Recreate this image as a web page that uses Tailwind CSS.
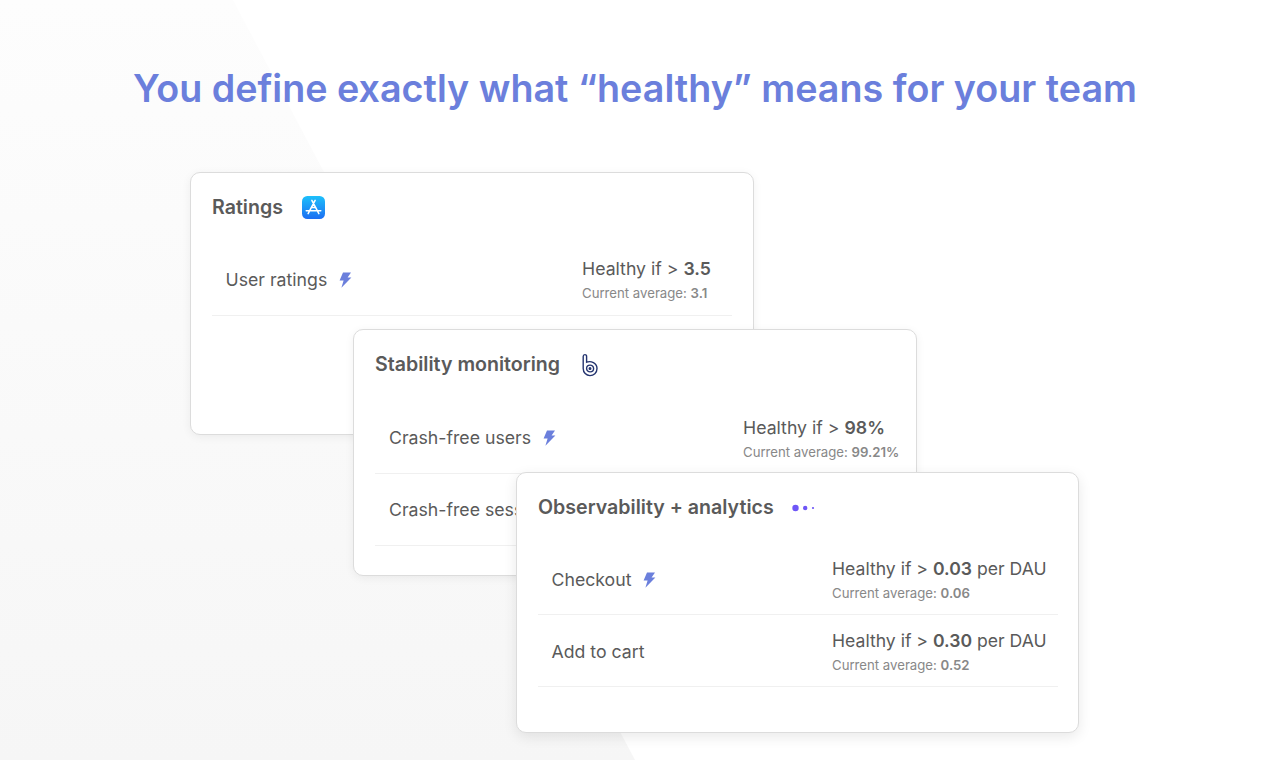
<!DOCTYPE html>
<html lang="en">
  <head>
    <meta charset="UTF-8" />
    <meta name="viewport" content="width=device-width, initial-scale=1.0" />
    <title>Healthy</title>
    <script src="https://cdn.jsdelivr.net/npm/@tailwindcss/browser@4"></script>
  </head>
  <body class="bg-white font-['Inter',sans-serif] text-[#5a5a5a] antialiased">
    <div class="relative w-[1270px] h-[760px] overflow-hidden">
      <!-- background wedge -->
      <svg class="absolute inset-0" width="1270" height="760" viewBox="0 0 1270 760">
        <defs>
          <linearGradient id="wedge" x1="0" y1="0" x2="0" y2="1">
            <stop offset="0" stop-color="#fdfdfd" />
            <stop offset="1" stop-color="#f6f6f6" />
          </linearGradient>
        </defs>
        <polygon points="0,0 233,0 635,760 0,760" fill="url(#wedge)" />
      </svg>

      <h1 class="relative pt-[65px] text-center text-[37.7px] leading-[46px] font-semibold text-[#6b7fdc]">
        You define exactly what “healthy” means for your team
      </h1>

      <!-- card 1 -->
      <section class="absolute left-[190px] top-[172px] w-[564px] h-[263px] bg-white border border-[#dcdcdc] rounded-[10px] shadow-[0_2px_10px_rgba(0,0,0,0.06)] px-[21px]">
        <div class="flex items-center h-[70px] gap-[19px] pb-[1px]">
          <h2 class="text-[19.6px] font-semibold">Ratings</h2>
          <svg width="23" height="23" viewBox="0 0 24 24">
            <defs>
              <linearGradient id="store" x1="0" y1="0" x2="0" y2="1">
                <stop offset="0" stop-color="#1dc0fb" />
                <stop offset="1" stop-color="#1c6ef2" />
              </linearGradient>
            </defs>
            <rect width="24" height="24" rx="5.5" fill="url(#store)" />
            <path d="M10.3 4.6 17.6 18.4M13.7 4.6 6.4 18.4M4.4 15.4H19.6M9.6 12H14.4" stroke="#fff" stroke-width="1.6" stroke-linecap="round" fill="none" />
          </svg>
        </div>
        <div class="flex items-center justify-between h-[73px] pl-[13.5px] border-b border-[#f0f0f0]">
          <div class="flex items-center gap-[11px] text-[17.7px] pt-[2px]">
            <span>User ratings</span>
            <svg width="14" height="16" viewBox="0 0 14 16"><path d="M5 0.5H13L9.6 5.6H13.4L3.4 15.8 5.6 8.6H1.6Z" fill="#6b7fdc" /></svg>
          </div>
          <div class="w-[150px] pt-[2px]">
            <p class="text-[17.7px] leading-[24px]">Healthy if &gt; <b class="font-semibold">3.5</b></p>
            <p class="text-[13.2px] leading-[20px] mt-[2px] text-[#888]">Current average: <b class="font-semibold">3.1</b></p>
          </div>
        </div>
      </section>

      <!-- card 2 -->
      <section class="absolute left-[353px] top-[329px] w-[564px] h-[247px] bg-white border border-[#dcdcdc] rounded-[10px] shadow-[0_2px_10px_rgba(0,0,0,0.06)] px-[21px]">
        <div class="flex items-center h-[70px] gap-[21px] pb-[1px]">
          <h2 class="text-[19.6px] font-semibold">Stability monitoring</h2>
          <svg width="18" height="24" viewBox="0 0 18 24" fill="none" stroke="#24346f" stroke-width="1.4" stroke-linecap="round">
            <path d="M2.2 15.6V3.4C2.2 1 5.6 1 5.6 3.4V9.2C10 7.6 16 10 16 15.6 16 20 12.6 22.6 9 22.6 5.2 22.6 2.2 19.6 2.2 15.6" />
            <path d="M5.6 15.6C5.6 11 12.6 11 12.6 15.6 12.6 20 5.6 20 5.6 15.6Z" />
            <circle cx="9" cy="15.6" r="0.8" fill="#24346f" />
          </svg>
        </div>
        <div class="flex items-center justify-between h-[74px] pt-[4px] pl-[14px] border-b border-[#f0f0f0]">
          <div class="flex items-center gap-[11px] text-[17.7px]">
            <span>Crash-free users</span>
            <svg width="14" height="16" viewBox="0 0 14 16"><path d="M5 0.5H13L9.6 5.6H13.4L3.4 15.8 5.6 8.6H1.6Z" fill="#6b7fdc" /></svg>
          </div>
          <div class="w-[152px] shrink-0 whitespace-nowrap">
            <p class="text-[17.7px] leading-[24px]">Healthy if &gt; <b class="font-semibold">98%</b></p>
            <p class="text-[13.2px] leading-[20px] mt-[2px] text-[#888]">Current average: <b class="font-semibold">99.21%</b></p>
          </div>
        </div>
        <div class="flex items-center h-[72px] pt-[2px] pl-[14px] border-b border-[#f0f0f0] text-[17.7px]">
          <span class="whitespace-nowrap">Crash-free sessions</span>
        </div>
      </section>

      <!-- card 3 -->
      <section class="absolute left-[516px] top-[472px] w-[563px] h-[261px] bg-white border border-[#dcdcdc] rounded-[10px] shadow-[0_4px_14px_rgba(0,0,0,0.09)] pl-[21px] pr-[20px]">
        <div class="flex items-center h-[70px] gap-[18px] pb-[1px]">
          <h2 class="text-[19.6px] font-semibold">Observability + analytics</h2>
          <svg width="24" height="10" viewBox="0 0 24 10" fill="#6e56f7">
            <circle cx="3.5" cy="5" r="3.2" />
            <circle cx="13.2" cy="5" r="2.2" />
            <circle cx="21" cy="5" r="1.1" />
          </svg>
        </div>
        <div class="flex items-center justify-between h-[72px] pt-[2px] pl-[13.5px] border-b border-[#f0f0f0]">
          <div class="flex items-center gap-[11px] text-[17.7px] pt-[1px]">
            <span>Checkout</span>
            <svg width="14" height="16" viewBox="0 0 14 16"><path d="M5 0.5H13L9.6 5.6H13.4L3.4 15.8 5.6 8.6H1.6Z" fill="#6b7fdc" /></svg>
          </div>
          <div class="w-[226px]">
            <p class="text-[17.6px] leading-[24px]">Healthy if &gt; <b class="font-semibold">0.03</b> per DAU</p>
            <p class="text-[13.2px] leading-[20px] mt-[2px] text-[#888]">Current average: <b class="font-semibold">0.06</b></p>
          </div>
        </div>
        <div class="flex items-center justify-between h-[72px] pt-[2px] pl-[13.5px] border-b border-[#f0f0f0]">
          <span class="text-[17.7px] pt-[1px]">Add to cart</span>
          <div class="w-[226px]">
            <p class="text-[17.6px] leading-[24px]">Healthy if &gt; <b class="font-semibold">0.30</b> per DAU</p>
            <p class="text-[13.2px] leading-[20px] mt-[2px] text-[#888]">Current average: <b class="font-semibold">0.52</b></p>
          </div>
        </div>
      </section>
    </div>
  </body>
</html>
